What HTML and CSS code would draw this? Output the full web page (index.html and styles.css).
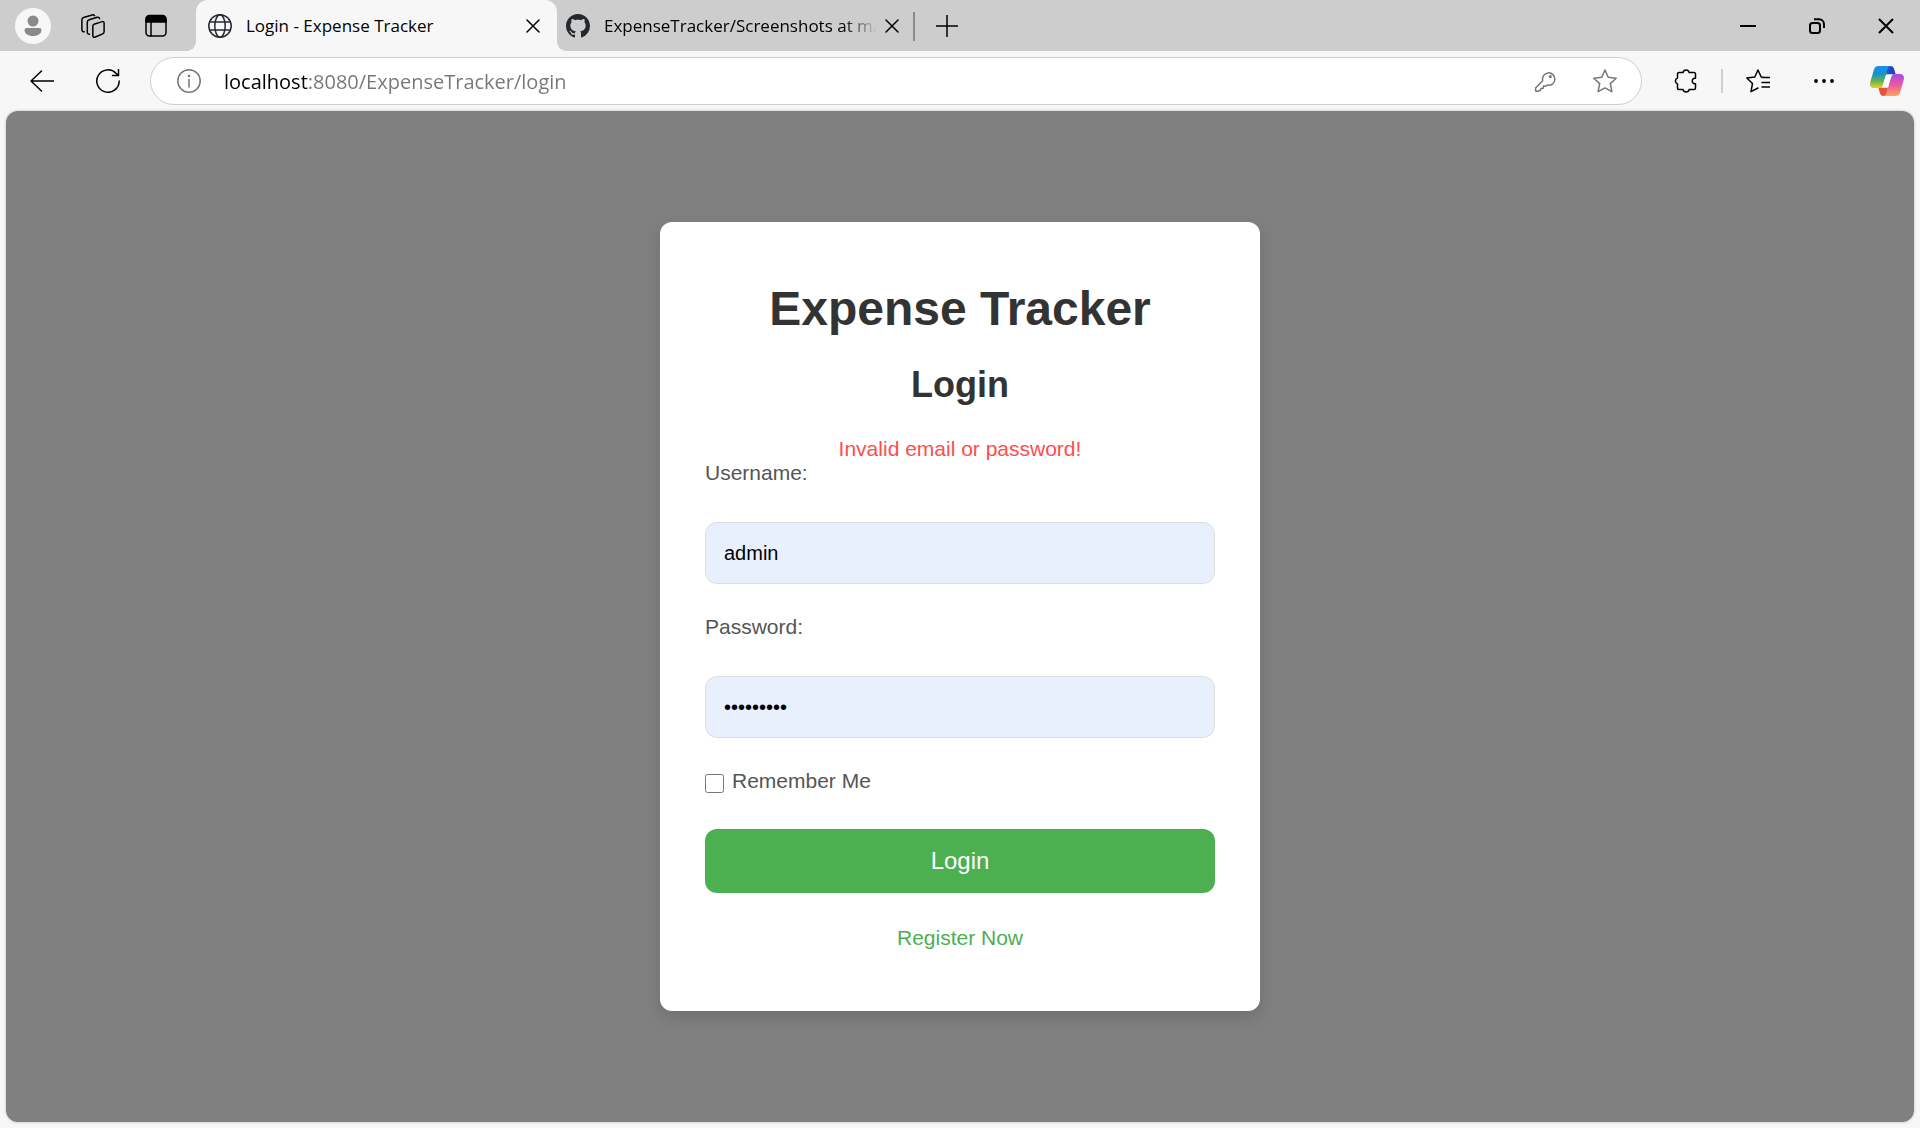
FILE: index.html
```html
<!DOCTYPE html>
<html lang="en">
<head>
<meta charset="utf-8">
<meta name="viewport" content="width=device-width, initial-scale=1">
<title>Login - Expense Tracker</title>
<link rel="stylesheet" href="styles.css">
</head>
<body>
<header class="chrome">
  <div class="tab-strip">
    <div class="strip-tools">
      <button class="avatar" type="button" aria-label="Profile">
        <svg width="36" height="36" viewBox="0 0 36 36"><circle cx="18" cy="18" r="18" fill="#f7f7f7"/><circle cx="18" cy="13" r="5.5" fill="#8a8a8a"/><path d="M11.500 20h13a2 2 0 0 1 2 2c0 3.500-3.500 6-8.500 6s-8.500-2.500-8.500-6a2 2 0 0 1 2-2z" fill="#8a8a8a"/></svg>
      </button>
      <button class="icon-button" type="button" aria-label="Workspaces">
        <svg class="line" width="24" height="24" viewBox="0 0 24 24"><path d="m13 10.300 8.200-2.700a1.400 1.400 0 0 1 1.900 1.300v8.800a2.500 2.500 0 0 1-1.500 2.200l-7.800 3.300a1.500 1.500 0 0 1-2-1.400v-9.500a2.200 2.200 0 0 1 1.200-2z"/><path d="M8.500 20.300a2 2 0 0 1-2.200-2V8.200a2.500 2.500 0 0 1 1.900-2.400l7.900-2.500a2 2 0 0 1 2.500 1.200"/><path d="M3.200 17.800A2 2 0 0 1 .9 16V5.800a2.500 2.500 0 0 1 1.700-2.300l8.500-2.500a2 2 0 0 1 2.500.700"/></svg>
      </button>
      <button class="icon-button" type="button" aria-label="Tab actions">
        <svg class="line" width="24" height="24" viewBox="0 0 24 24"><rect x="2" y="2" width="20" height="20" rx="3.500"/><path d="M2 8V5a3.500 3.500 0 0 1 3.500-3.500h13A3.500 3.500 0 0 1 22 5v3z" fill="#000"/><path d="M7 8v14"/></svg>
      </button>
    </div>
    <div class="tab tab-active">
      <svg class="line globe" width="24" height="24" viewBox="0 0 24 24"><circle cx="12" cy="12" r="11.200"/><ellipse cx="12" cy="12" rx="5.200" ry="11.200"/><path d="M1.800 8h20.400M1.800 16h20.400"/></svg>
      <span class="tab-title">Login - Expense Tracker</span>
      <button class="tab-close" type="button" aria-label="Close tab"><svg class="line" width="14" height="14" viewBox="0 0 14 14"><path d="m1 1 12 12M13 1 1 13"/></svg></button>
    </div>
    <div class="tab tab-idle">
      <svg width="24" height="24" viewBox="0 0 16 16"><path fill="#24292f" d="M8 0C3.580 0 0 3.580 0 8c0 3.540 2.290 6.530 5.470 7.590.400.070.550-.170.550-.380 0-.190-.010-.820-.010-1.490-2.010.370-2.530-.490-2.690-.940-.090-.230-.480-.940-.820-1.130-.280-.150-.680-.520-.010-.530.630-.010 1.080.580 1.230.820.720 1.210 1.870.870 2.330.660.070-.520.280-.870.510-1.070-1.780-.200-3.640-.890-3.640-3.950 0-.870.310-1.590.820-2.150-.080-.200-.360-1.020.080-2.120 0 0 .670-.210 2.200.820.640-.180 1.320-.270 2-.270s1.360.090 2 .270c1.530-1.040 2.200-.820 2.200-.820.440 1.100.160 1.920.080 2.120.510.560.820 1.270.820 2.150 0 3.070-1.870 3.750-3.650 3.950.290.250.540.730.540 1.480 0 1.070-.010 1.930-.010 2.200 0 .210.150.460.550.380A8.010 8.010 0 0 0 16 8c0-4.420-3.580-8-8-8z"/></svg>
      <span class="tab-title tab-title-faded">ExpenseTracker/Screenshots at ma</span>
      <button class="tab-close" type="button" aria-label="Close tab"><svg class="line" width="14" height="14" viewBox="0 0 14 14"><path d="m1 1 12 12M13 1 1 13"/></svg></button>
    </div>
    <button class="new-tab" type="button" aria-label="New tab"><svg class="line" width="22" height="22" viewBox="0 0 22 22"><path d="M11 0v22M0 11h22"/></svg></button>
    <div class="window-controls">
      <button type="button" aria-label="Minimize"><svg class="bold-line" width="16" height="16" viewBox="0 0 16 16"><path d="M0 8h16"/></svg></button>
      <button type="button" aria-label="Restore"><svg class="bold-line" width="16" height="16" viewBox="0 0 16 16"><rect x="1" y="5" width="10" height="10" rx="2.500"/><path d="M5 1.200h5a5 5 0 0 1 5 5V10"/></svg></button>
      <button type="button" aria-label="Close"><svg class="bold-line" width="16" height="16" viewBox="0 0 16 16"><path d="m1 1 14 14M15 1 1 15"/></svg></button>
    </div>
  </div>
  <div class="toolbar">
    <div class="nav-tools">
      <button class="icon-button" type="button" aria-label="Back"><svg class="line" width="24" height="24" viewBox="0 0 24 24"><path d="M24 12H1M11.500 2 1 12l10.500 10"/></svg></button>
      <button class="icon-button" type="button" aria-label="Refresh"><svg class="line" width="24" height="24" viewBox="0 0 24 24"><path d="M23.200 12A11.200 11.200 0 1 1 20 4.200l2.500 2.300M22.500.500v6h-6"/></svg></button>
    </div>
    <div class="address">
      <button class="icon-button soft" type="button" aria-label="Site information"><svg class="line" width="24" height="24" viewBox="0 0 24 24"><circle cx="12" cy="12" r="11.200"/><path d="M12 10.500V18"/><circle cx="12" cy="7" r=".6"/></svg></button>
      <input class="address-input" type="text" aria-label="Address" value="localhost:8080/ExpenseTracker/login">
      <button class="icon-button soft" type="button" aria-label="Saved passwords"><svg class="line" width="24" height="24" viewBox="0 0 24 24"><path d="M9.700 11.800a6.200 6.200 0 1 1 4.500 4.300l-2 1.200-1.700-.2-.3 2.200-2.200.2-.5 1.700-1.500.3-.8.800H3.400a.8.800 0 0 1-.8-.8v-2.500z"/><circle cx="17.300" cy="7.600" r=".8"/></svg></button>
      <button class="icon-button soft" type="button" aria-label="Add to favorites"><svg class="line" width="24" height="24" viewBox="0 0 24 24"><path d="m12 1 3.200 7.200 8 1-5.900 5.400 1.600 8.100L12 18.800l-6.900 3.900 1.600-8.100L.8 9.200l8-1z"/></svg></button>
    </div>
    <div class="browser-tools">
      <button class="icon-button" type="button" aria-label="Extensions"><svg class="line" width="24" height="24" viewBox="0 0 24 24"><path d="M5 3.500h4a3.200 3.200 0 0 1 6.200 0H20a1.500 1.500 0 0 1 1.500 1.500v4.300h-1a2.800 2.800 0 0 0 0 5.500h1V19a1.500 1.500 0 0 1-1.500 1.500h-4.800a3.200 3.200 0 0 1-6.200 0H5A1.500 1.500 0 0 1 3.500 19v-4a3.200 3.200 0 0 1 0-6V5A1.500 1.500 0 0 1 5 3.500z"/></svg></button>
      <span class="divider"></span>
      <button class="icon-button" type="button" aria-label="Favorites"><svg class="line" width="24" height="24" viewBox="0 0 24 24"><path d="M18 8.200 15.200 8 12 1 8.800 8l-8 1 5.700 5.500L5 22.700l7-3.700M16 8.500h8M16 13.500h8M16 18h8"/></svg></button>
      <button class="icon-button menu-button" type="button" aria-label="Settings and more"><svg width="24" height="24" viewBox="0 0 24 24"><circle cx="4" cy="12" r="1.900"/><circle cx="12" cy="12" r="1.900"/><circle cx="20" cy="12" r="1.900"/></svg></button>
      <button class="icon-button copilot-button" type="button" aria-label="Copilot">
        <svg width="34" height="30" viewBox="0 0 34 30">
          <defs>
            <linearGradient id="cool" x1="0" y1="0" x2="0" y2="1"><stop offset="0" stop-color="#1a8fe8"/><stop offset=".35" stop-color="#1593c8"/><stop offset=".65" stop-color="#58b05c"/><stop offset="1" stop-color="#f4cc10"/></linearGradient>
            <linearGradient id="warm" x1="0" y1="0" x2="0" y2="1"><stop offset="0" stop-color="#a64be8"/><stop offset=".5" stop-color="#ea5a9c"/><stop offset="1" stop-color="#ffa25c"/></linearGradient>
            <linearGradient id="navy" x1="0" y1="0" x2="1" y2="0"><stop offset="0" stop-color="#2353d8"/><stop offset="1" stop-color="#1b3fbe"/></linearGradient>
          </defs>
          <path d="M17 0h3.500c2 0 3 1.200 3.600 3l1.600 5.500H16z" fill="url(#navy)"/>
          <path d="M17 30h-3.500c-2 0-3-1.200-3.600-3l-1.600-5.500H18z" fill="#e9533b"/>
          <path d="M8.500 0H21c-2 0-3 1.500-3.700 4l-4 14c-.7 2.500-2 4-4.300 4H4C.8 22-.6 19.500.3 16L3.800 4C4.600 1.500 6 0 8.500 0z" fill="url(#cool)"/>
          <path d="M25.500 30H13c2 0 3-1.500 3.700-4l4-14c.7-2.500 2-4 4.300-4h5c3.200 0 4.600 2.500 3.700 6l-3.500 12c-.8 2.500-2.200 4-4.700 4z" fill="url(#warm)"/>
          <path d="M17.500 8.500h5.200c-1 .8-1.500 2-2 3.500l-2.700 9.500h-6.500c.9-.8 1.400-2 1.800-3.500l2.200-7.500c.3-1 1-2 2-2z" fill="#fff"/>
        </svg>
      </button>
    </div>
  </div>
</header>
<main class="page">
  <form class="card">
    <h1 class="card-title">Expense Tracker</h1>
    <h2 class="card-subtitle">Login</h2>
    <p class="error" role="alert">Invalid email or password!</p>
    <label class="field-label" for="username">Username:</label>
    <input class="field" id="username" type="text" value="admin">
    <label class="field-label" for="password">Password:</label>
    <input class="field" id="password" type="password" value="admin1234">
    <div class="remember">
      <input class="checkbox" id="remember" type="checkbox">
      <label for="remember">Remember Me</label>
    </div>
    <button class="submit" type="submit">Login</button>
    <a class="register" href="#register">Register Now</a>
  </form>
</main>
</body>
</html>
```
FILE: styles.css
```css
*, *::before, *::after { box-sizing: border-box; }

body {
  margin: 0;
  min-height: 100vh;
  display: flex;
  flex-direction: column;
  background: #f7f7f7;
  font-family: "Liberation Sans", Arial, sans-serif;
}

button { padding: 0; border: 0; background: none; color: inherit; font: inherit; }
svg { display: block; flex: none; }

.line, .bold-line {
  fill: none;
  stroke: currentColor;
  stroke-width: 1.5;
  stroke-linecap: round;
  stroke-linejoin: round;
}
.bold-line { stroke-width: 2; stroke-linecap: butt; }

/* Browser chrome */
.chrome { font-family: "Open Sans", "Noto Sans", sans-serif; color: #000; }

.tab-strip { display: flex; height: 51px; background: #cdcdcd; }

.strip-tools {
  display: flex;
  align-items: center;
  gap: 30px;
  width: 196px;
  padding-left: 15px;
}
.strip-tools .icon-button + .icon-button { margin-left: 9px; }

.tab { display: flex; align-items: center; gap: 14px; padding: 0 11px 0 12px; position: relative; }
.tab-active { width: 361px; background: #f7f7f7; border-radius: 12px 12px 0 0; }
.tab-active::before, .tab-active::after {
  content: "";
  position: absolute;
  bottom: 0;
  width: 10px;
  height: 10px;
}
.tab-active::before { left: -10px; background: radial-gradient(circle at 0 0, transparent 10px, #f7f7f7 10px); }
.tab-active::after { right: -10px; background: radial-gradient(circle at 100% 0, transparent 10px, #f7f7f7 10px); }
.tab-idle { width: 358px; padding: 0 16px 0 9px; }
.tab-idle::after {
  content: "";
  position: absolute;
  right: 0;
  top: 12px;
  width: 2px;
  height: 29px;
  background: #8a8a8a;
}
.globe { color: #24292f; }

.tab-title { flex: 1; min-width: 0; white-space: nowrap; font-size: 17px; line-height: 24px; }
.tab-title-faded {
  margin-right: -10px;
  mask-image: linear-gradient(90deg, #000 calc(100% - 38px), transparent calc(100% - 4px));
}
.tab-close { display: flex; justify-content: center; width: 26px; padding: 6px 0; }
.tab-idle .tab-close { width: 14px; }

.new-tab { display: flex; align-items: center; justify-content: center; width: 64px; }

.window-controls { display: flex; margin-left: auto; }
.window-controls button { display: flex; align-items: center; justify-content: center; width: 69px; }

.toolbar { display: flex; align-items: center; height: 60px; }
.nav-tools { display: flex; gap: 42px; width: 150px; padding-left: 30px; }

.address {
  flex: 1;
  display: flex;
  align-items: center;
  gap: 36px;
  height: 48px;
  padding: 0 24px 0 26px;
  border: 1px solid #cfcfcf;
  border-radius: 24px;
  background: #fff;
}
.address-input {
  flex: 1;
  min-width: 0;
  margin-left: -13px;
  padding: 1px 0 0;
  border: 0;
  font: 20px/28px "Open Sans", "Noto Sans", sans-serif;
  color: transparent;
  background: linear-gradient(90deg, #000 84px, #767676 84px);
  background-clip: text;
}
.soft { color: #767676; }

.browser-tools { display: flex; align-items: center; gap: 23px; padding: 0 16px 0 32px; }
.menu-button { margin-left: 19px; }
.copilot-button { margin-left: 11px; }
.divider { width: 2px; height: 24px; background: #cfcfcf; }

/* Login page */
.page {
  flex: 1;
  display: flex;
  align-items: center;
  justify-content: center;
  margin: 0 6px 6px;
  padding: 24px;
  border-radius: 12px;
  background: #808080;
  box-shadow: 0 0 3px rgba(0, 0, 0, 0.25);
}

.card {
  display: flex;
  flex-direction: column;
  width: 100%;
  max-width: 600px;
  padding: 59px 45px 61px;
  border-radius: 12px;
  background: #fff;
  box-shadow: 0 6px 18px rgba(0, 0, 0, 0.15);
  color: #555;
  font-size: 21px;
  line-height: 24px;
}

.card-title, .card-subtitle { margin: 0; color: #333; text-align: center; }
.card-title { font-size: 48px; line-height: 56px; }
.card-subtitle { margin: 28px 0 32px; font-size: 36px; line-height: 40px; }
.error { margin: 0; color: #ff4d4d; text-align: center; }

.field {
  width: 100%;
  height: 62px;
  margin: 37px 0 31px;
  padding: 0 18px;
  border: 1px solid #ddd;
  border-radius: 12px;
  background: #e8f0fe;
  color: #000;
  font: 20px/24px "Liberation Sans", Arial, sans-serif;
}

.remember { display: flex; align-items: center; gap: 8px; }
.checkbox { width: 19px; height: 19px; margin: 4px 0 0; }

.submit {
  height: 64px;
  margin: 36px 0 33px;
  border-radius: 12px;
  background: #4caf50;
  color: #fff;
  font-size: 24px;
}

.register { align-self: center; color: #4caf50; text-decoration: none; }
```
